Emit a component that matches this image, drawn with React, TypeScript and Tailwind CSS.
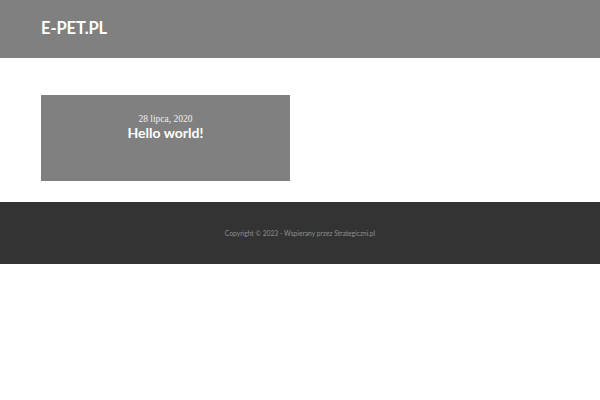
export default function App() {
  return (
    <div className="min-h-[400px] bg-white font-['Lato','Liberation_Sans',sans-serif]">
      <header className="h-[58px] bg-[#808080] px-[41px] flex items-center">
        <a className="text-[16.5px] font-bold text-white tracking-[-0.1px] leading-none pb-[1px]">E-PET.PL</a>
      </header>

      <main className="px-[41px] pt-[37px] pb-[21px]">
        <div className="w-[249px] h-[86px] bg-[#808080] flex flex-col items-center pt-[18px]">
          <p className="text-[9.5px] leading-[12px] text-[#eeeeee] font-['Liberation_Serif',serif]">28 lipca, 2020</p>
          <h2 className="text-[14px] font-bold text-white leading-[16px] mt-0">Hello world!</h2>
        </div>
      </main>

      <footer className="h-[62px] bg-[#333333] flex items-center justify-center">
        <p className="text-[6.7px] text-[#8f8f8f]">Copyright © 2023 - Wspierany przez Strategiczni.pl</p>
      </footer>
    </div>
  )
}
